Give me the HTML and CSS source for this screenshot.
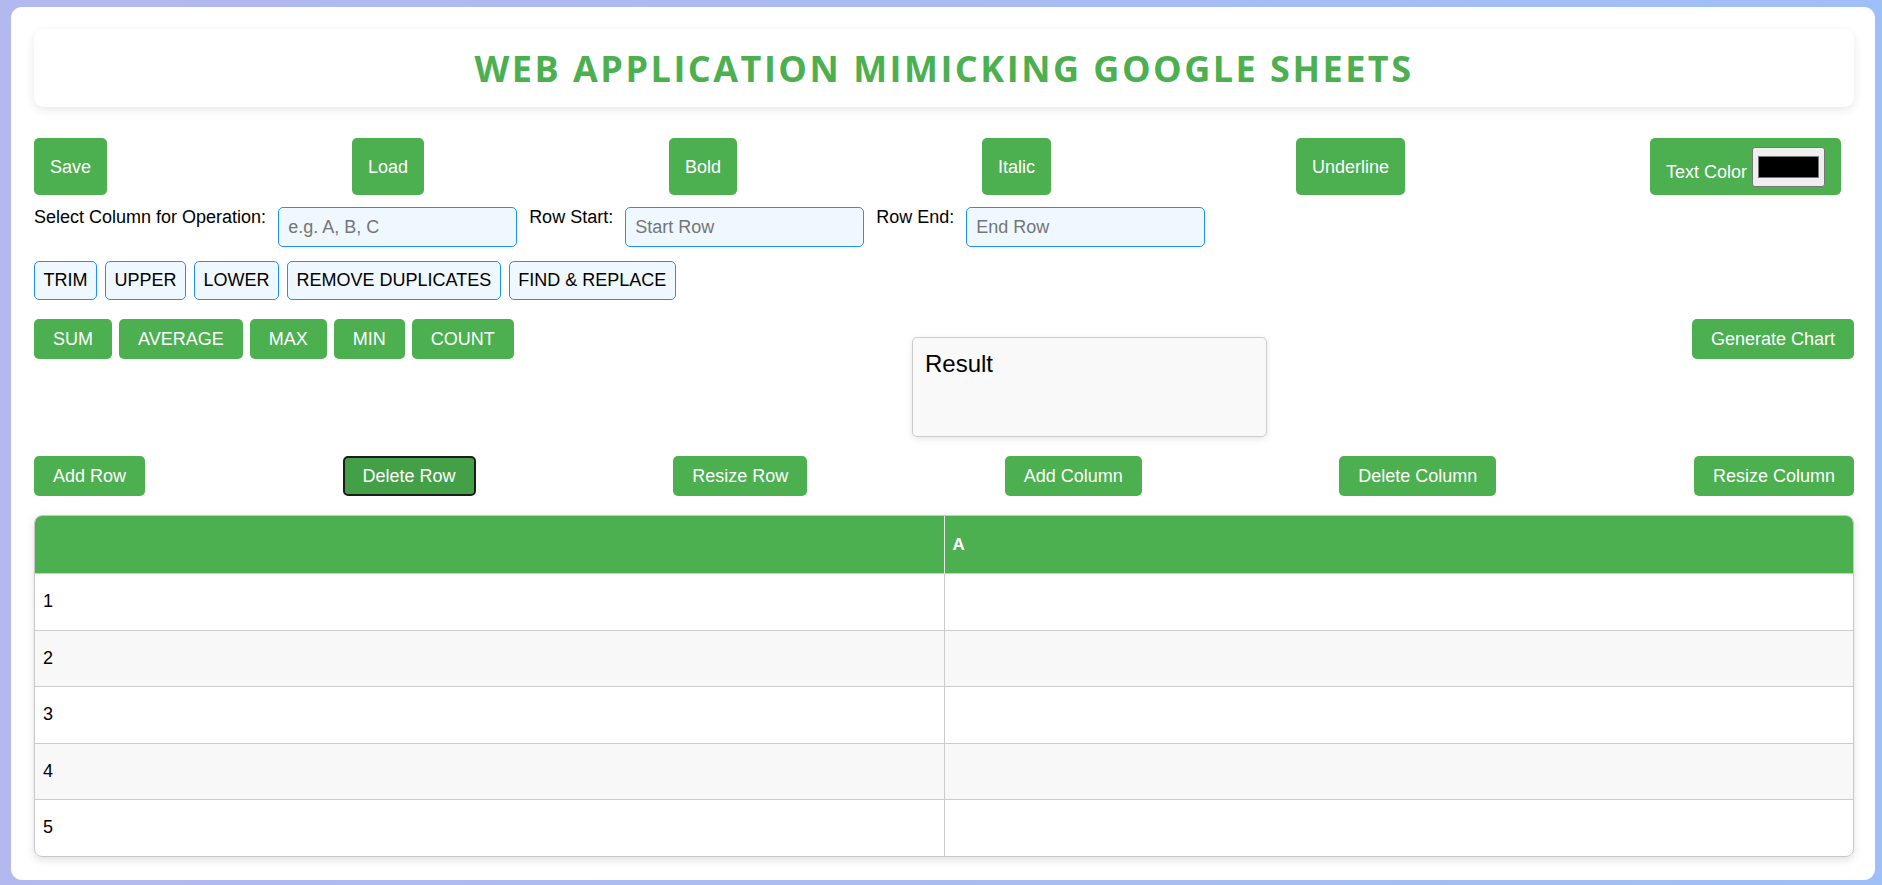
FILE: index.html
```html
<!DOCTYPE html>
<html lang="en">
<head>
<meta charset="utf-8">
<title>Web Application Mimicking Google Sheets</title>
<link rel="stylesheet" href="styles.css">
</head>
<body>
<div class="app">
  <header class="title-bar">
    <h1 class="title">Web Application Mimicking Google Sheets</h1>
  </header>

  <div class="format-bar">
    <button class="btn btn-format">Save</button>
    <button class="btn btn-format">Load</button>
    <button class="btn btn-format">Bold</button>
    <button class="btn btn-format">Italic</button>
    <button class="btn btn-format">Underline</button>
    <label class="btn btn-format color-btn"><span class="color-label">Text Color</span><input class="color-input" type="color" value="#000000"></label>
  </div>

  <div class="range-bar">
    <label class="range-label" for="col">Select Column for Operation:</label>
    <input class="range-input" id="col" type="text" placeholder="e.g. A, B, C">
    <label class="range-label" for="rs">Row Start:</label>
    <input class="range-input" id="rs" type="text" placeholder="Start Row">
    <label class="range-label" for="re">Row End:</label>
    <input class="range-input" id="re" type="text" placeholder="End Row">
  </div>

  <div class="text-ops">
    <button class="btn-outline">TRIM</button>
    <button class="btn-outline">UPPER</button>
    <button class="btn-outline">LOWER</button>
    <button class="btn-outline">REMOVE DUPLICATES</button>
    <button class="btn-outline">FIND &amp; REPLACE</button>
  </div>

  <div class="calc-row">
    <div class="calc-ops">
      <button class="btn">SUM</button>
      <button class="btn">AVERAGE</button>
      <button class="btn">MAX</button>
      <button class="btn">MIN</button>
      <button class="btn">COUNT</button>
    </div>
    <div class="result">Result</div>
    <button class="btn chart-btn">Generate Chart</button>
  </div>

  <div class="struct-bar">
    <button class="btn">Add Row</button>
    <button class="btn btn-focused">Delete Row</button>
    <button class="btn">Resize Row</button>
    <button class="btn">Add Column</button>
    <button class="btn">Delete Column</button>
    <button class="btn">Resize Column</button>
  </div>

  <div class="sheet-wrap">
    <table class="sheet">
      <thead>
        <tr><th></th><th>A</th></tr>
      </thead>
      <tbody>
        <tr><td>1</td><td></td></tr>
        <tr><td>2</td><td></td></tr>
        <tr><td>3</td><td></td></tr>
        <tr><td>4</td><td></td></tr>
        <tr><td>5</td><td></td></tr>
      </tbody>
    </table>
  </div>
</div>
</body>
</html>
```

FILE: styles.css
```css
* {
  box-sizing: border-box;
}

html, body {
  margin: 0;
}

body {
  min-height: 100vh;
  padding: 7px 7px 5px 11px;
  background: linear-gradient(90deg, #b3b9ef 0%, #a9bcf2 50%, #9fbff7 100%);
  font-family: "Liberation Sans", Arial, sans-serif;
  font-size: 18px;
  color: #000;
}

.app {
  min-height: calc(100vh - 12px);
  background: #fff;
  border-radius: 11px;
  padding: 22px 21px 20px 23px;
  display: flex;
  flex-direction: column;
}

/* Title */
.title-bar {
  background: #fff;
  border-radius: 10px;
  box-shadow: 0 3px 10px rgba(0, 0, 0, 0.09);
  padding: 16px 0 14px;
  text-align: center;
}

.title {
  margin: 0;
  font-family: "Open Sans", "DejaVu Sans", sans-serif;
  font-weight: 700;
  font-size: 36px;
  line-height: 48px;
  letter-spacing: 2.5px;
  text-transform: uppercase;
  color: #4caf50;
}

/* Buttons */
.btn {
  background: #4caf50;
  color: #fff;
  border: none;
  border-radius: 5px;
  font-family: "Liberation Sans", Arial, sans-serif;
  font-size: 18px;
  line-height: 22px;
  padding: 9px 19px;
  cursor: pointer;
  white-space: nowrap;
}

.btn-format {
  padding: 9px 16px;
}

.btn-focused {
  background: #43a047;
  border: 2px solid #1c1c1c;
  padding: 7px 18px;
}

/* Format bar */
.format-bar {
  margin-top: 31px;
  display: flex;
  justify-content: space-between;
  padding-right: 13px;
}

.color-btn {
  display: flex;
  align-items: flex-end;
  gap: 5px;
  padding: 9px 16px 8px 16px;
}

.color-label {
  margin-bottom: 4px;
}

.color-input {
  width: 73px;
  height: 40px;
  padding: 0;
  margin: 0;
  border: 1px solid #767676;
  border-radius: 3px;
  background: #efefef;
  cursor: pointer;
}

.color-input::-webkit-color-swatch-wrapper {
  padding: 8px 5px;
}

.color-input::-webkit-color-swatch {
  border: 1px solid #777;
  border-radius: 0;
}

/* Range bar */
.range-bar {
  margin-top: 12px;
  display: flex;
  align-items: flex-start;
  gap: 12px;
}

.range-label {
  line-height: 21px;
  white-space: nowrap;
}

.range-input {
  width: 239px;
  height: 40px;
  padding: 0 9px;
  border: 1px solid #1e90ff;
  border-radius: 5px;
  background: #f0f8ff;
  font-family: "Liberation Sans", Arial, sans-serif;
  font-size: 18px;
  color: #000;
}

.range-input::placeholder {
  color: #757575;
}

/* Text operations */
.text-ops {
  margin-top: 14px;
  display: flex;
  gap: 8px;
}

.btn-outline {
  background: #f0f8ff;
  color: #000;
  border: 1px solid #1e90ff;
  border-radius: 5px;
  font-family: "Liberation Sans", Arial, sans-serif;
  font-size: 18px;
  line-height: 21px;
  padding: 8px 8.5px;
  cursor: pointer;
  white-space: nowrap;
}

/* Calculation row */
.calc-row {
  margin-top: 19px;
  display: flex;
  align-items: flex-start;
}

.calc-ops {
  width: 878px;
  display: flex;
  gap: 7px;
}

.result {
  margin-top: 18px;
  width: 355px;
  height: 100px;
  padding: 12px;
  background: #f9f9f9;
  border: 1px solid #ccc;
  border-radius: 5px;
  box-shadow: 0 2px 6px rgba(0, 0, 0, 0.1);
  font-size: 24px;
  line-height: 1.15;
}

.chart-btn {
  margin-left: auto;
}

/* Structure bar */
.struct-bar {
  margin-top: 19px;
  display: flex;
  justify-content: space-between;
}

/* Sheet */
.sheet-wrap {
  margin-top: 19px;
  border: 1px solid #c8c8c8;
  border-radius: 8px;
  overflow: hidden;
  box-shadow: 0 3px 8px rgba(0, 0, 0, 0.12);
}

.sheet {
  width: 100%;
  border-collapse: collapse;
  table-layout: fixed;
}

.sheet th {
  background: #4caf50;
  color: #fff;
  text-align: left;
  font-weight: 700;
  font-size: 17px;
  line-height: 21px;
  padding: 18px 8px;
}

.sheet th + th {
  border-left: 1px solid #e6e6e6;
}

.sheet td {
  font-size: 18px;
  line-height: 21.5px;
  padding: 17px 8px;
  border-top: 1px solid #ccc;
}

.sheet td + td {
  border-left: 1px solid #ccc;
}

.sheet tbody tr:nth-child(even) td {
  background: #f8f8f8;
}
```
